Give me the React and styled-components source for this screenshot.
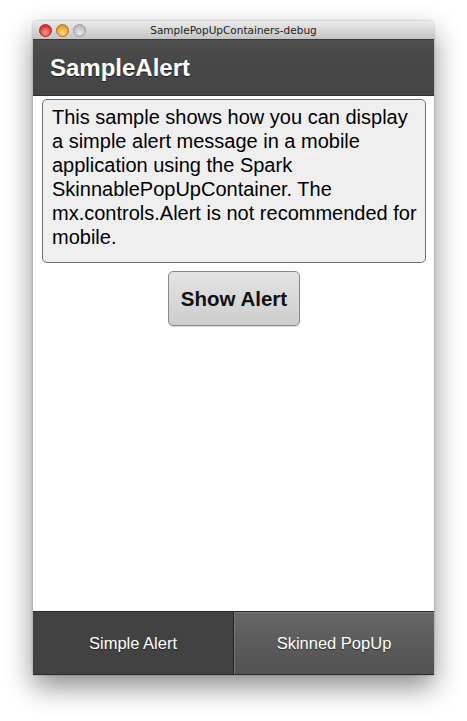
import { useState } from 'react';
import styled, { createGlobalStyle } from 'styled-components';

const GlobalStyle = createGlobalStyle`
  html, body {
    margin: 0;
    padding: 0;
    background: #ffffff;
  }
  body {
    font-family: 'Liberation Sans', Arial, sans-serif;
  }
`;

const Page = styled.div`
  width: 467px;
  height: 721px;
  padding: 21px 0 0 33px;
  box-sizing: border-box;
`;

const Window = styled.div`
  width: 401px;
  height: 654px;
  display: flex;
  flex-direction: column;
  border-radius: 4px 4px 0 0;
  box-shadow: 0 12px 28px rgba(0, 0, 0, 0.45), 0 0 2px rgba(0, 0, 0, 0.35);
  overflow: hidden;
`;

const TitleBar = styled.div`
  height: 18px;
  flex: none;
  display: flex;
  align-items: center;
  padding-left: 6px;
  background: linear-gradient(#ebebeb, #c4c4c4);
  border-bottom: 1px solid #3a3a3a;
  position: relative;
`;

const Lights = styled.div`
  display: flex;
  gap: 4px;
`;

const Light = styled.span`
  width: 13px;
  height: 13px;
  border-radius: 50%;
  box-sizing: border-box;
  border: 1px solid ${p => p.$edge};
  background: radial-gradient(circle at 50% 70%, ${p => p.$light}, ${p => p.$dark} 75%);
`;

const WindowTitle = styled.div`
  position: absolute;
  left: 0;
  right: 0;
  text-align: center;
  font-family: 'DejaVu Sans', 'Liberation Sans', sans-serif;
  font-size: 10.5px;
  color: #222;
`;

const Header = styled.div`
  height: 55px;
  flex: none;
  display: flex;
  align-items: center;
  padding-left: 17px;
  background: linear-gradient(#4e4e4e, #474747 40%, #454545);
  border-bottom: 1px solid #2e2e2e;
`;

const HeaderTitle = styled.h1`
  margin: 0;
  font-size: 24px;
  font-weight: bold;
  color: #fff;
  text-shadow: 0 1px 1px rgba(0, 0, 0, 0.6);
`;

const Content = styled.div`
  flex: 1;
  background: #fff;
  padding: 3px 8px 0 9px;
  display: flex;
  flex-direction: column;
  align-items: center;
  gap: 8px;
`;

const Description = styled.div`
  align-self: stretch;
  box-sizing: border-box;
  height: 164px;
  padding: 5px 4px 0 9px;
  background: #efefef;
  border: 1px solid #6f6f6f;
  border-radius: 5px;
  font-size: 20px;
  line-height: 24px;
  color: #000;
`;

const AlertButton = styled.button`
  width: 132px;
  height: 55px;
  border: 1px solid #888;
  border-radius: 5px;
  background: linear-gradient(#e4e4e4, #cdcdcd);
  box-shadow: 0 1px 1px rgba(0, 0, 0, 0.15);
  font-family: inherit;
  font-size: 20.5px;
  font-weight: bold;
  color: #111;
  cursor: pointer;
`;

const TabBar = styled.div`
  height: 62px;
  flex: none;
  display: flex;
  border-top: 1px solid #2c2c2c;
  border-bottom: 1px solid #2c2c2c;
`;

const Tab = styled.button`
  flex: 1;
  border: none;
  border-left: ${p => (p.$first ? 'none' : '1px solid #232323')};
  background: ${p =>
    p.$active
      ? '#424242'
      : 'linear-gradient(#676767, #5b5b5b 50%, #535353)'};
  box-shadow: ${p => (p.$active ? 'none' : 'inset 1px 1px 0 #777')};
  font-family: inherit;
  font-size: 16.5px;
  color: #fff;
  text-shadow: 0 1px 1px rgba(0, 0, 0, 0.5);
  cursor: pointer;
`;

export default function App() {
  const [tab, setTab] = useState(0);

  return (
    <Page>
      <GlobalStyle />
      <Window>
        <TitleBar>
          <Lights>
            <Light $light="#ff9a90" $dark="#d42a22" $edge="#9c2a22" />
            <Light $light="#ffe08a" $dark="#e8961c" $edge="#a8701c" />
            <Light $light="#e8e8e8" $dark="#b8b8b8" $edge="#9a9a9a" />
          </Lights>
          <WindowTitle>SamplePopUpContainers-debug</WindowTitle>
        </TitleBar>
        <Header>
          <HeaderTitle>SampleAlert</HeaderTitle>
        </Header>
        <Content>
          <Description>
            This sample shows how you can display a simple alert message in a
            mobile application using the Spark SkinnablePopUpContainer. The
            mx.controls.Alert is not recommended for mobile.
          </Description>
          <AlertButton>Show Alert</AlertButton>
        </Content>
        <TabBar>
          <Tab $first $active={tab === 0} onClick={() => setTab(0)}>
            Simple Alert
          </Tab>
          <Tab $active={tab === 1} onClick={() => setTab(1)}>
            Skinned PopUp
          </Tab>
        </TabBar>
      </Window>
    </Page>
  );
}
